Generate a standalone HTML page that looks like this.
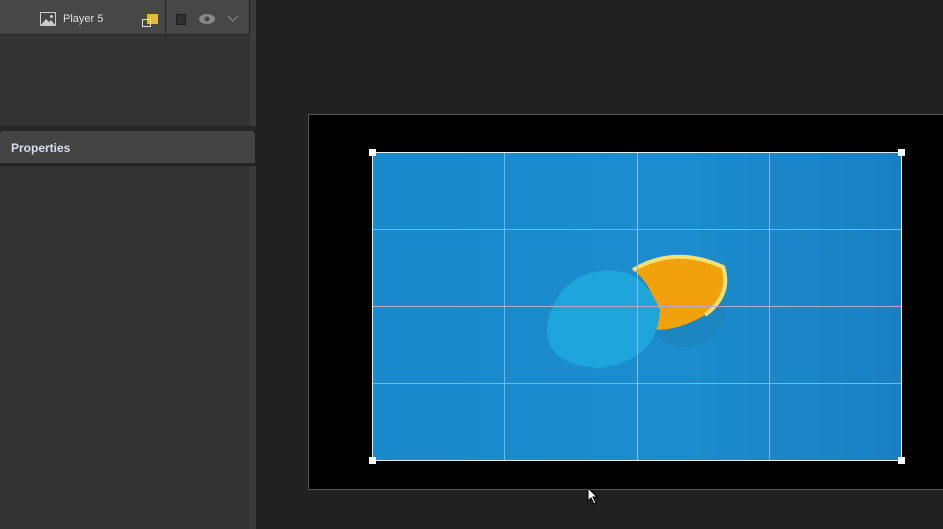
<!DOCTYPE html><html><head><style>
body{margin:0;width:943px;height:529px;background:#212121;position:relative;overflow:hidden;font-family:"Liberation Sans",sans-serif}
div{position:absolute;box-sizing:border-box}
</style></head><body>
<div style="left:0;top:0;width:249px;height:35px;background:#474747;border-bottom:1px solid #262626"></div>
<div style="left:165px;top:0;width:1px;height:34px;background:#262626"></div>
<svg style="position:absolute;left:40px;top:12px" width="18" height="15" viewBox="0 0 18 15"><rect x="0.5" y="0.5" width="15" height="13" fill="none" stroke="#ccc"/><path d="M1 13 L6 7 L9 10 L11 8 L15 13Z" fill="#ccc"/><circle cx="11.5" cy="4.5" r="1.5" fill="#ccc"/></svg>
<div style="left:63px;top:13px;font-size:11px;color:#e0e0e0">Player 5</div>
<div style="left:147px;top:14px;width:11px;height:10px;background:#e3b935"></div>
<div style="left:142px;top:19px;width:9px;height:8px;border:1px solid #ddd"></div>
<div style="left:176px;top:14px;width:10px;height:11px;background:#2f2f2f;border:1px solid #1e1e1e"></div>
<svg style="position:absolute;left:198px;top:13px" width="18" height="12"><ellipse cx="9" cy="6" rx="8" ry="5" fill="#888"/><circle cx="9" cy="6" r="2.5" fill="#474747"/></svg>
<svg style="position:absolute;left:227px;top:15px" width="12" height="8"><path d="M1 1 L6 6 L11 1" stroke="#888" fill="none"/></svg>
<div style="left:0;top:35px;width:250px;height:91px;background:#333"></div>
<div style="left:250px;top:0;width:6px;height:126px;background:#3c3c3c"></div>
<div style="left:0;top:126px;width:256px;height:5px;background:#272727"></div>
<div style="left:0;top:131px;width:255px;height:34px;background:#444;border-bottom:2px solid #262626;border-radius:3px 3px 0 0"></div>
<div style="left:11px;top:141px;font-size:12px;font-weight:bold;color:#dde">Properties</div>
<div style="left:0;top:166px;width:249px;height:363px;background:#333"></div>
<div style="left:249px;top:166px;width:7px;height:363px;background:#3a3a3a"></div>
<div style="left:308px;top:114px;width:640px;height:376px;background:#000;border:1px solid #555"></div>
<div style="left:372px;top:152px;width:530px;height:309px;background:linear-gradient(90deg,#1a8acc,#1b8ccd 60%,#1a80c4);border:1px solid #dfeff8"></div>
<svg style="position:absolute;left:540px;top:250px" width="190" height="125"><ellipse cx="145" cy="55" rx="42" ry="42" fill="#1b86c0"/><path d="M93 20 Q135 -5 183 17 Q192 45 165 65 Q140 80 115 80 Q120 40 93 20Z" fill="#f0a10c"/><path d="M93 20 Q135 -5 183 17 Q192 45 165 65" stroke="#f7df70" stroke-width="4" fill="none"/><path d="M50 23 Q100 10 120 60 Q118 110 60 118 Q0 115 8 70 Q18 33 50 23Z" fill="#1ea6dc"/></svg>
<div style="left:504px;top:153px;width:1px;height:307px;background:#7cb6dc"></div>
<div style="left:637px;top:153px;width:1px;height:307px;background:#8fb9e0"></div>
<div style="left:769px;top:153px;width:1px;height:307px;background:#7cb6dc"></div>
<div style="left:373px;top:229px;width:528px;height:1px;background:#7cb6dc"></div>
<div style="left:373px;top:306px;width:528px;height:1px;background:#c0a8cc"></div>
<div style="left:373px;top:383px;width:528px;height:1px;background:#7cb6dc"></div>
<div style="left:369px;top:149px;width:7px;height:7px;background:#fff"></div>
<div style="left:898px;top:149px;width:7px;height:7px;background:#fff"></div>
<div style="left:369px;top:457px;width:7px;height:7px;background:#fff"></div>
<div style="left:898px;top:457px;width:7px;height:7px;background:#fff"></div>
<svg style="position:absolute;left:587px;top:487px" width="12" height="18"><path d="M1 1 L1 14 L4 11 L7 17 L9 16 L6 10 L10 10Z" fill="#fff" stroke="#000" stroke-width="1"/></svg>
</body></html>
